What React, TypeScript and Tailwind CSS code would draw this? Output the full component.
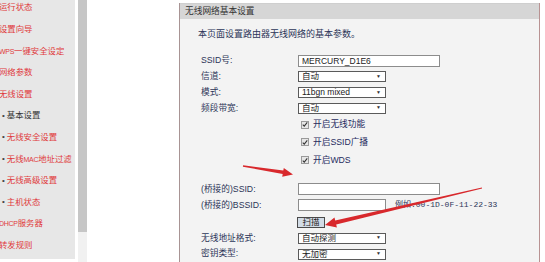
const font = "font-['Liberation_Sans','Noto_Sans_CJK_SC',sans-serif]";

const L = ({ children }: { children: React.ReactNode }) => (
  <span className="text-[7px] tracking-[-0.3px]">{children}</span>
);

const nav: { key: string; t: React.ReactNode; sub?: boolean; active?: boolean }[] = [
  { key: "a", t: "运行状态" },
  { key: "b", t: "设置向导" },
  { key: "c", t: <><L>WPS</L>一键安全设定</> },
  { key: "d", t: "网络参数" },
  { key: "e", t: "无线设置" },
  { key: "f", t: "基本设置", sub: true, active: true },
  { key: "g", t: "无线安全设置", sub: true },
  { key: "h", t: <>无线<L>MAC</L>地址过滤</>, sub: true },
  { key: "i", t: "无线高级设置", sub: true },
  { key: "j", t: "主机状态", sub: true },
  { key: "k", t: <><L>DHCP</L>服务器</> },
  { key: "l", t: "转发规则" },
];

function Field({ w, children }: { w: number; children?: React.ReactNode }) {
  return (
    <div
      className={`h-[12px] bg-white border border-[#8c8c8c] flex items-center pl-[3px] text-[8.5px] text-[#222] ${
        w === 142 ? "w-[142px]" : "w-[88px]"
      }`}
    >
      {children}
    </div>
  );
}

function Select({ value }: { value: string }) {
  return (
    <div className="h-[11px] w-[88px] bg-white border border-[#5a5a5a] flex items-center justify-between pl-[3px] pr-[4px] text-[8.5px] text-[#222]">
      <span>{value}</span>
      <span className="text-[5px] text-[#333]">▼</span>
    </div>
  );
}

function Row({ label, h, children }: { label: string; h: string; children?: React.ReactNode }) {
  return (
    <div className={`flex items-center ${h}`}>
      <div className="w-[118px] pl-[21px] shrink-0 text-[8.7px] text-[#2c3558] whitespace-nowrap">{label}</div>
      {children}
    </div>
  );
}

function Check({ label }: { label: string }) {
  return (
    <div className="h-[18px] flex items-center pl-[121px] gap-[4px]">
      <span className="w-[8px] h-[8px] border border-[#9a9a9a] bg-[#e6e6e6] flex items-center justify-center">
        <svg viewBox="0 0 8 8" className="w-[7px] h-[7px]">
          <path d="M1 4.2 L3 6.2 L7 1.2" stroke="#333" strokeWidth="1.4" fill="none" />
        </svg>
      </span>
      <span className="text-[8.7px] text-[#1f2b5e]">{label}</span>
    </div>
  );
}

export default function App() {
  return (
    <div className={`relative w-[545px] h-[262px] overflow-hidden bg-white flex ${font}`}>
      <div className="w-[75px] h-full bg-[#e7e7e7] flex flex-col -mt-[3px] overflow-hidden">
        {nav.map((n) => (
          <div key={n.key} className="h-[21.6px] shrink-0 flex items-center text-[8.4px] whitespace-nowrap">
            {n.sub ? (
              <span className="pl-[2px] flex items-center">
                <span className="text-[#444] text-[8px]">•</span>
                <span className={`ml-[2px] ${n.active ? "text-[#333]" : "text-[#e03a3c]"}`}>{n.t}</span>
              </span>
            ) : (
              <span className="-ml-[1px] text-[#e03a3c]">{n.t}</span>
            )}
          </div>
        ))}
      </div>
      <div className="ml-[3px] w-[9px] flex flex-col">
        <div className="h-[232px] bg-[#c6c6c6]" />
        <div className="flex-1 bg-[#f1f1f1]" />
      </div>
      <div className="ml-[92px] mt-[3px] w-[361px] h-[259px] flex flex-col border-x border-l-[#a89494] border-r-[#b89292] bg-[#f3f3f3]">
        <div className="h-[16px] shrink-0 bg-[#d6d6d6] border-t border-[#cfcfcf] flex items-center pl-[5px] text-[8.7px] text-[#333]">
          无线网络基本设置
        </div>
        <div className="mt-[9px] h-[14px] flex items-center pl-[18px] text-[9px] text-[#2c3558]">
          本页面设置路由器无线网络的基本参数。
        </div>
        <div className="mt-[11px]" />
        <Row label="SSID号:" h="h-[16px]">
          <Field w={142}>MERCURY_D1E6</Field>
        </Row>
        <Row label="信道:" h="h-[16px]">
          <Select value="自动" />
        </Row>
        <Row label="模式:" h="h-[16px]">
          <Select value="11bgn mixed" />
        </Row>
        <Row label="频段带宽:" h="h-[15px]">
          <Select value="自动" />
        </Row>
        <Check label="开启无线功能" />
        <Check label="开启SSID广播" />
        <Check label="开启WDS" />
        <div className="mt-[12px]" />
        <Row label="(桥接的)SSID:" h="h-[16px]">
          <Field w={142} />
        </Row>
        <Row label="(桥接的)BSSID:" h="h-[16px]">
          <Field w={88} />
          <span className="ml-[9px] text-[8px] text-[#2c3558] font-['Liberation_Mono','Noto_Sans_CJK_SC',monospace]">
            例如:00-1D-0F-11-22-33
          </span>
        </Row>
        <div className="mt-[3px] h-[12px] flex items-center pl-[117px]">
          <div className="w-[28px] h-[11px] bg-[#d2dce6] border border-[#4a4a4a] flex items-center justify-center text-[8.5px] text-[#222]">
            扫描
          </div>
        </div>
        <div className="mt-[2px]" />
        <Row label="无线地址格式:" h="h-[16px]">
          <Select value="自动探测" />
        </Row>
        <Row label="密钥类型:" h="h-[16px]">
          <Select value="无加密" />
        </Row>
      </div>
      <svg className="absolute inset-0 pointer-events-none" width="545" height="262" viewBox="0 0 545 262">
        <polygon
          fill="#d8282c"
          points="243.1,165.3 283.3,170.6 283.8,167.9 293,174.5 282.2,176.7 282.7,174 242.9,166.7"
        />
        <polygon
          fill="#d8282c"
          points="481.9,187.6 335.2,220.5 334.5,217.6 325,225 336.9,227.4 336.2,224.5 482.1,188.4"
        />
      </svg>
    </div>
  );
}
